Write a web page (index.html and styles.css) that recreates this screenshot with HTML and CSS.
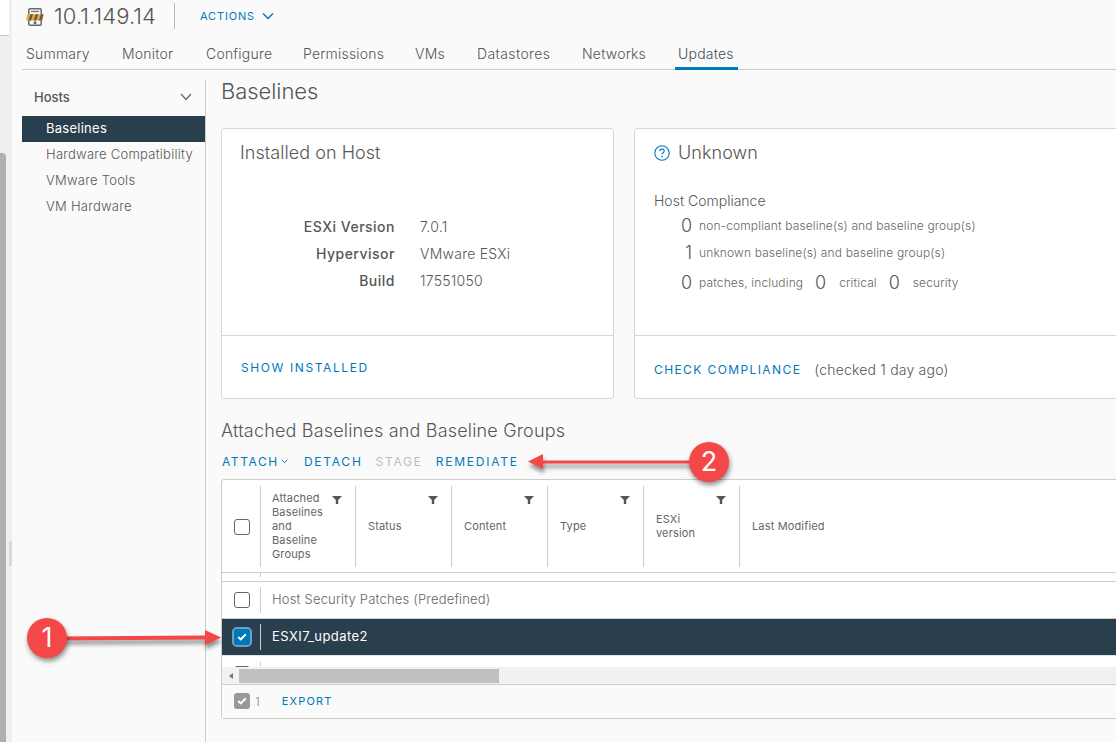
FILE: index.html
```html
<!DOCTYPE html>
<html lang="en">
<head>
<meta charset="utf-8">
<title>10.1.149.14 - Updates</title>
<link rel="stylesheet" href="styles.css">
</head>
<body>
<div class="page">
  <aside class="gutter">
    <div class="gutter-top"></div>
    <div class="gutter-track">
      <div class="gutter-thumb"></div>
      <div class="gutter-inner"><div class="gutter-mini"></div></div>
    </div>
  </aside>
  <div class="main">
    <header class="head">
      <svg class="host-icon" width="18" height="18" viewBox="0 0 18 18">
        <rect x="2.800" y=".8" width="12.400" height="16.400" rx="1" fill="#f6f6f6" stroke="#6a6a6a" stroke-width="1.500"/>
        <rect x="5" y="2.800" width="8" height="1.300" fill="#777"/>
        <path d="M1.500 6.200H18L16.500 12.500H0z" fill="#eaa53c"/>
        <path d="M4.500 6.200H7L5 12.500H2.500zM9.700 6.200h2.500l-2 6.300H7.700zM14.900 6.200h2.500l-2 6.300h-2.500z" fill="#5d5a50"/>
        <circle cx="9" cy="14.800" r="1.500" fill="#666"/>
      </svg>
      <h1 class="host-name">10.1.149.14</h1>
      <span class="head-sep"></span>
      <a class="actions">ACTIONS
        <svg width="12" height="8" viewBox="0 0 12 8"><path d="M1 1.500l5 5 5-5" fill="none" stroke="#0079b8" stroke-width="1.500"/></svg>
      </a>
    </header>
    <nav class="tabs">
      <a class="tab t1">Summary</a>
      <a class="tab t2">Monitor</a>
      <a class="tab t3">Configure</a>
      <a class="tab t4">Permissions</a>
      <a class="tab t5">VMs</a>
      <a class="tab t6">Datastores</a>
      <a class="tab t7">Networks</a>
      <a class="tab t8 active">Updates</a>
    </nav>
    <div class="body-row">
      <nav class="side">
        <div class="side-head"><span>Hosts</span>
          <svg width="12" height="8" viewBox="0 0 12 8"><path d="M1 1l5 5.500L11 1" fill="none" stroke="#666" stroke-width="1.200"/></svg>
        </div>
        <a class="side-link selected">Baselines</a>
        <a class="side-link">Hardware Compatibility</a>
        <a class="side-link">VMware Tools</a>
        <a class="side-link">VM Hardware</a>
      </nav>
      <main class="content">
        <h2 class="page-title">Baselines</h2>
        <div class="cards">
          <section class="card card-a">
            <div class="card-body">
              <h3 class="card-title">Installed on Host</h3>
              <dl class="facts">
                <dt>ESXi Version</dt><dd>7.0.1</dd>
                <dt>Hypervisor</dt><dd>VMware ESXi</dd>
                <dt>Build</dt><dd>17551050</dd>
              </dl>
            </div>
            <div class="card-foot"><a class="link">SHOW INSTALLED</a></div>
          </section>
          <section class="card card-b">
            <div class="card-body body-b">
              <h3 class="card-title status">
                <svg width="16" height="16" viewBox="0 0 16 16"><circle cx="8" cy="8" r="7.200" fill="none" stroke="#0079b8" stroke-width="1.100"/><path d="M5.800 6.200c0-1.300 1-2.100 2.200-2.100s2.200.8 2.200 2c0 1.700-2.200 1.700-2.200 3.500" fill="none" stroke="#0079b8" stroke-width="1.100"/><circle cx="8" cy="11.600" r=".8" fill="#0079b8"/></svg>
                Unknown</h3>
              <div class="compliance-label">Host Compliance</div>
              <div class="comp-row r1"><b class="num">0</b><span>non-compliant baseline(s) and baseline group(s)</span></div>
              <div class="comp-row r2"><b class="num">1</b><span>unknown baseline(s) and baseline group(s)</span></div>
              <div class="comp-row r3"><b class="num">0</b><span>patches, including</span><b class="num n2">0</b><span class="s2">critical</span><b class="num n3">0</b><span class="s3">security</span></div>
            </div>
            <div class="card-foot foot-b"><a class="link check">CHECK COMPLIANCE</a><span class="checked">(checked 1 day ago)</span></div>
          </section>
        </div>
        <h2 class="sub-title">Attached Baselines and Baseline Groups</h2>
        <div class="toolbar">
          <a class="tool attach">ATTACH<svg width="7" height="5" viewBox="0 0 7 5"><path d="M.7.8l2.800 2.800L6.300.8" fill="none" stroke="#0079b8" stroke-width="1"/></svg></a>
          <a class="tool detach">DETACH</a>
          <a class="tool stage">STAGE</a>
          <a class="tool">REMEDIATE</a>
        </div>
        <div class="grid">
          <div class="grid-head">
            <div class="cell-check"><span class="box"></span></div>
            <div class="col col-1"><span class="col-label">Attached Baselines and Baseline Groups</span><svg class="funnel" viewBox="0 0 10 8"><path d="M0 0h10L6.200 4V8H3.800V4z"/></svg></div>
            <div class="col"><span class="col-label">Status</span><svg class="funnel" viewBox="0 0 10 8"><path d="M0 0h10L6.200 4V8H3.800V4z"/></svg></div>
            <div class="col"><span class="col-label">Content</span><svg class="funnel" viewBox="0 0 10 8"><path d="M0 0h10L6.200 4V8H3.800V4z"/></svg></div>
            <div class="col"><span class="col-label">Type</span><svg class="funnel" viewBox="0 0 10 8"><path d="M0 0h10L6.200 4V8H3.800V4z"/></svg></div>
            <div class="col col-5"><span class="col-label">ESXi version</span><svg class="funnel" viewBox="0 0 10 8"><path d="M0 0h10L6.200 4V8H3.800V4z"/></svg></div>
            <div class="col col-last"><span class="col-label">Last Modified</span></div>
          </div>
          <div class="stub"><i></i></div>
          <div class="row row-plain">
            <div class="cell-check"><span class="box"></span></div>
            <div class="row-text">Host Security Patches (Predefined)</div>
          </div>
          <div class="row row-selected">
            <div class="cell-check"><span class="box box-on"><svg width="10" height="8" viewBox="0 0 10 8"><path d="M1.200 4l2.600 2.400L8.800 1.200" fill="none" stroke="#fff" stroke-width="2"/></svg></span></div>
            <div class="row-text">ESXI7_update2</div>
          </div>
          <div class="row-peek"><span class="peek-box"></span><i></i></div>
          <div class="hscroll">
            <span class="hs-arrow"></span>
            <span class="hs-thumb"></span>
          </div>
          <div class="grid-foot">
            <span class="box-gray"><svg width="10" height="8" viewBox="0 0 10 8"><path d="M1.200 4l2.600 2.400L8.800 1.200" fill="none" stroke="#fff" stroke-width="2"/></svg></span>
            <span class="count">1</span>
            <a class="export">EXPORT</a>
          </div>
        </div>
      </main>
    </div>
  </div>
</div>
<div class="callout c1">
  <svg class="arrow" width="166" height="24" viewBox="0 0 166 24"><path d="M0 10.500L150 9.500V4L166 11.500 150 19V13.500L0 14.500z" fill="#f44747"/></svg>
  <span class="badge">1</span>
</div>
<div class="callout c2">
  <svg class="arrow" width="170" height="24" viewBox="0 0 170 24"><path d="M170 10.500H15V4L0 11.500 15 19V13.500H170z" fill="#f44747"/></svg>
  <span class="badge">2</span>
</div>
</body>
</html>
```

FILE: styles.css
```css
* { box-sizing: border-box; }
html, body { margin: 0; padding: 0; height: 100%; overflow: hidden; }
body { font-family: Inter, "Liberation Sans", sans-serif; color: #565656; background: #fafafa; position: relative; font-weight: 300; }
a { text-decoration: none; }
h1, h2, h3, dl, dd { margin: 0; font-weight: 300; }

.page { display: flex; width: 1116px; height: 742px; overflow: hidden; }
.gutter { width: 12px; flex: none; display: flex; flex-direction: column; background: #efefef; }
.gutter-top { height: 36px; flex: none; background: #fff; border-bottom: 1px solid #c8c8c8; width: 9px; }
.gutter-track { flex: 1; display: flex; padding-top: 117px; }
.gutter-thumb { width: 6px; background: #b0b0b0; border-top-right-radius: 4px; }
.gutter-inner { flex: 1; padding: 388px 0 0 3px; }
.gutter-mini { width: 3px; height: 25px; background: #d8d8d8; }

.main { flex: 1; min-width: 0; padding-left: 10px; display: flex; flex-direction: column; }
.head { display: flex; align-items: center; height: 32px; padding-left: 4px; flex: none; }
.host-icon { flex: none; margin-right: 10px; margin-top: 1px; }
.host-name { font-size: 22px; letter-spacing: .1px; color: #565656; line-height: 32px; width: 120px; flex: none; font-weight: 300; }
.head-sep { width: 1px; height: 26px; background: #b8b8b8; flex: none; }
.actions { color: #0079b8; font-size: 11px; letter-spacing: .85px; margin-left: 25px; display: flex; align-items: center; gap: 7px; font-weight: 400; }

.tabs { height: 38px; flex: none; display: flex; border-bottom: 1px solid #ccc; align-items: stretch; }
.tab { font-size: 14px; line-height: 43px; height: 38px; color: #565656; flex: none; padding: 0 4px; font-weight: 300; letter-spacing: .2px; }
.tab.active { border-bottom: 3px solid #0079b8; color: #3f4f5c; }
.t1 { width: 96px; }
.t2 { width: 84px; }
.t3 { width: 97px; }
.t4 { width: 112px; }
.t5 { width: 62px; }
.t6 { width: 105px; letter-spacing: .4px; }
.t7 { width: 97px; }
.t8 { width: 63px; padding: 0 0 0 3px; }

.body-row { flex: 1; display: flex; min-height: 0; padding-top: 10px; }
.side { width: 184px; flex: none; border-right: 1px solid #ccc; }
.side-head { height: 36px; display: flex; align-items: center; justify-content: space-between; padding: 0 13px 2px 12px; font-size: 13px; font-weight: 500; }
.side-link { display: block; height: 26px; line-height: 25px; padding-left: 24px; font-size: 13px; color: #565656; font-weight: 300; letter-spacing: .26px; }
.side-link.selected { background: #2a3f4e; color: #fff; font-weight: 400; }

.content { flex: 1; min-width: 0; padding-left: 15px; }
.page-title { font-size: 22px; line-height: 22px; color: #565656; height: 48px; letter-spacing: -.05px; }
.cards { display: flex; gap: 20px; height: 271px; width: 1000px; }
.card { background: #fff; border: 1px solid #d7d7d7; border-radius: 3px; display: flex; flex-direction: column; }
.card-a { width: 393px; flex: none; }
.card-b { width: 520px; flex: none; }
.card-body { height: 207px; flex: none; border-bottom: 1px solid #d7d7d7; padding: 13px 18px 0; }
.card-title { font-size: 18px; line-height: 22px; color: #565656; font-weight: 300; letter-spacing: .05px; }
.facts { display: grid; grid-template-columns: 155px 1fr; column-gap: 25px; row-gap: 0; margin-top: 49px; font-size: 14px; line-height: 27px; }
.facts dt { text-align: right; font-weight: 500; color: #565656; letter-spacing: .5px; }
.facts dd { color: #565656; letter-spacing: .25px; }
.card-foot { flex: 1; padding: 20px 19px 0; }
.link { color: #0079b8; font-size: 12px; letter-spacing: 1.600px; font-weight: 400; }
.link.check { letter-spacing: 1.400px; }
.body-b { padding-left: 19px; }
.status { display: flex; align-items: center; gap: 8px; }
.compliance-label { margin-top: 27px; font-size: 14px; line-height: 20px; }
.comp-row { display: flex; align-items: center; font-size: 12px; padding-left: 26px; }
.r1 { height: 28px; }
.r2 { height: 27px; }
.r3 { height: 32px; }
.num { font-size: 18px; font-weight: 300; width: 12px; text-align: right; margin-right: 7px; flex: none; }
.comp-row span { font-weight: 300; white-space: nowrap; color: #666; letter-spacing: .13px; }
.num.n2 { margin-left: 11px; margin-right: 13px; }
.num.n3 { margin-left: 11px; margin-right: 13px; }
.foot-b { display: flex; gap: 13px; align-items: center; padding: 4px 19px 0; }
.checked { font-size: 14px; letter-spacing: .2px; }

.sub-title { font-size: 18px; line-height: 22px; margin-top: 21px; letter-spacing: .18px; }
.toolbar { display: flex; height: 27px; align-items: center; margin-top: 6px; padding-left: 1px; gap: 13px; }
.tool { color: #0079b8; font-size: 12px; letter-spacing: 1.750px; font-weight: 400; display: flex; align-items: center; gap: 2px; }
.attach { margin-right: 3px; letter-spacing: 1.600px; }
.stage { color: #bdbdbd; }
.grid { width: 920px; margin-top: 4px; height: 240px; border: 1px solid #ccc; border-radius: 3px; background: #fff; display: flex; flex-direction: column; }
.grid-head { height: 93px; flex: none; display: flex; border-bottom: 1px solid #ccc; padding: 6px 0 5px; }
.cell-check { width: 38px; flex: none; display: flex; align-items: center; justify-content: center; padding-left: 2px; }
.box { width: 16px; height: 16px; border: 1px solid #666; border-radius: 3px; background: #fff; display: flex; align-items: center; justify-content: center; }
.box-on { background: #0079b8; border-color: #0079b8; outline: 2px solid #6a9fcb; outline-offset: 0; }
.col { width: 96px; flex: none; border-left: 1px solid #ccc; padding: 0 0 2px 12px; display: flex; align-items: center; font-size: 11px; line-height: 14px; font-weight: 400; position: relative; color: #666; letter-spacing: .15px; }
.col-1 { width: 95px; padding-left: 11px; }
.col-label { width: 60px; }
.col-last { width: 200px; }
.col-last .col-label { width: auto; }
.funnel { position: absolute; right: 13px; top: 10px; width: 10px; height: 8px; fill: #565656; }
.col-1 .funnel { right: 13px; }
.stub { height: 9px; flex: none; border-bottom: 1px solid #ccc; }
.stub i, .row-peek i { display: block; width: 1px; background: #ccc; height: 4px; margin-left: 38px; }
.row { display: flex; flex: none; align-items: center; }
.row-plain { height: 37px; border-bottom: 1px solid #ccc; }
.row-text { border-left: 1px solid #ccc; height: 26px; line-height: 24px; padding-left: 11px; font-size: 13px; font-weight: 300; letter-spacing: .19px; color: #666; }
.row-selected { background: #2a3f4e; height: 36px; }
.row-selected .row-text { color: #fff; font-weight: 400; letter-spacing: .45px; }
.row-peek { height: 12px; flex: none; position: relative; overflow: hidden; display: flex; align-items: flex-end; padding-bottom: 1px; border-top: 1px solid #e4e4e4; }
.peek-box { display: block; position: absolute; left: 12px; top: 10px; width: 16px; height: 16px; border: 1px solid #666; border-radius: 3px; }
.hscroll { height: 18px; flex: none; background: #f1f1f1; display: flex; align-items: center; border-bottom: 1px solid #ccc; }
.hs-arrow { width: 0; height: 0; margin-left: 7px; border-style: solid; border-width: 3.500px 4px 3.500px 0; border-color: transparent #777 transparent transparent; }
.hs-thumb { margin-left: 6px; width: 260px; height: 14px; background: #c0c0c0; }
.grid-foot { flex: 1; background: #fafafa; display: flex; align-items: center; padding: 0 0 1px 12px; font-size: 12px; border-radius: 0 0 3px 3px; }
.box-gray { width: 16px; height: 16px; border-radius: 3px; background: #999; display: flex; align-items: center; justify-content: center; }
.count { margin-left: 5px; color: #888; }
.export { color: #0079b8; font-size: 11px; letter-spacing: 1.200px; margin-left: 22px; font-weight: 400; }

.callout { position: absolute; }
.c1 { left: 27px; top: 618px; width: 194px; height: 40px; }
.c2 { left: 528px; top: 442px; width: 201px; height: 40px; }
.c1 .arrow { position: absolute; left: 28px; top: 8px; filter: drop-shadow(1px 4px 2px rgba(0,0,0,.45)); }
.c2 .arrow { position: absolute; left: 0; top: 8px; filter: drop-shadow(1px 4px 2px rgba(0,0,0,.45)); }
.badge { position: absolute; top: 0; width: 40px; height: 40px; border-radius: 50%; background: #f44747; color: #fff; font-size: 27px; line-height: 40px; text-align: center; font-weight: 400; box-shadow: 1px 3px 5px rgba(0,0,0,.45); }
.c1 .badge { left: 0; }
.c2 .badge { right: 0; }
```
